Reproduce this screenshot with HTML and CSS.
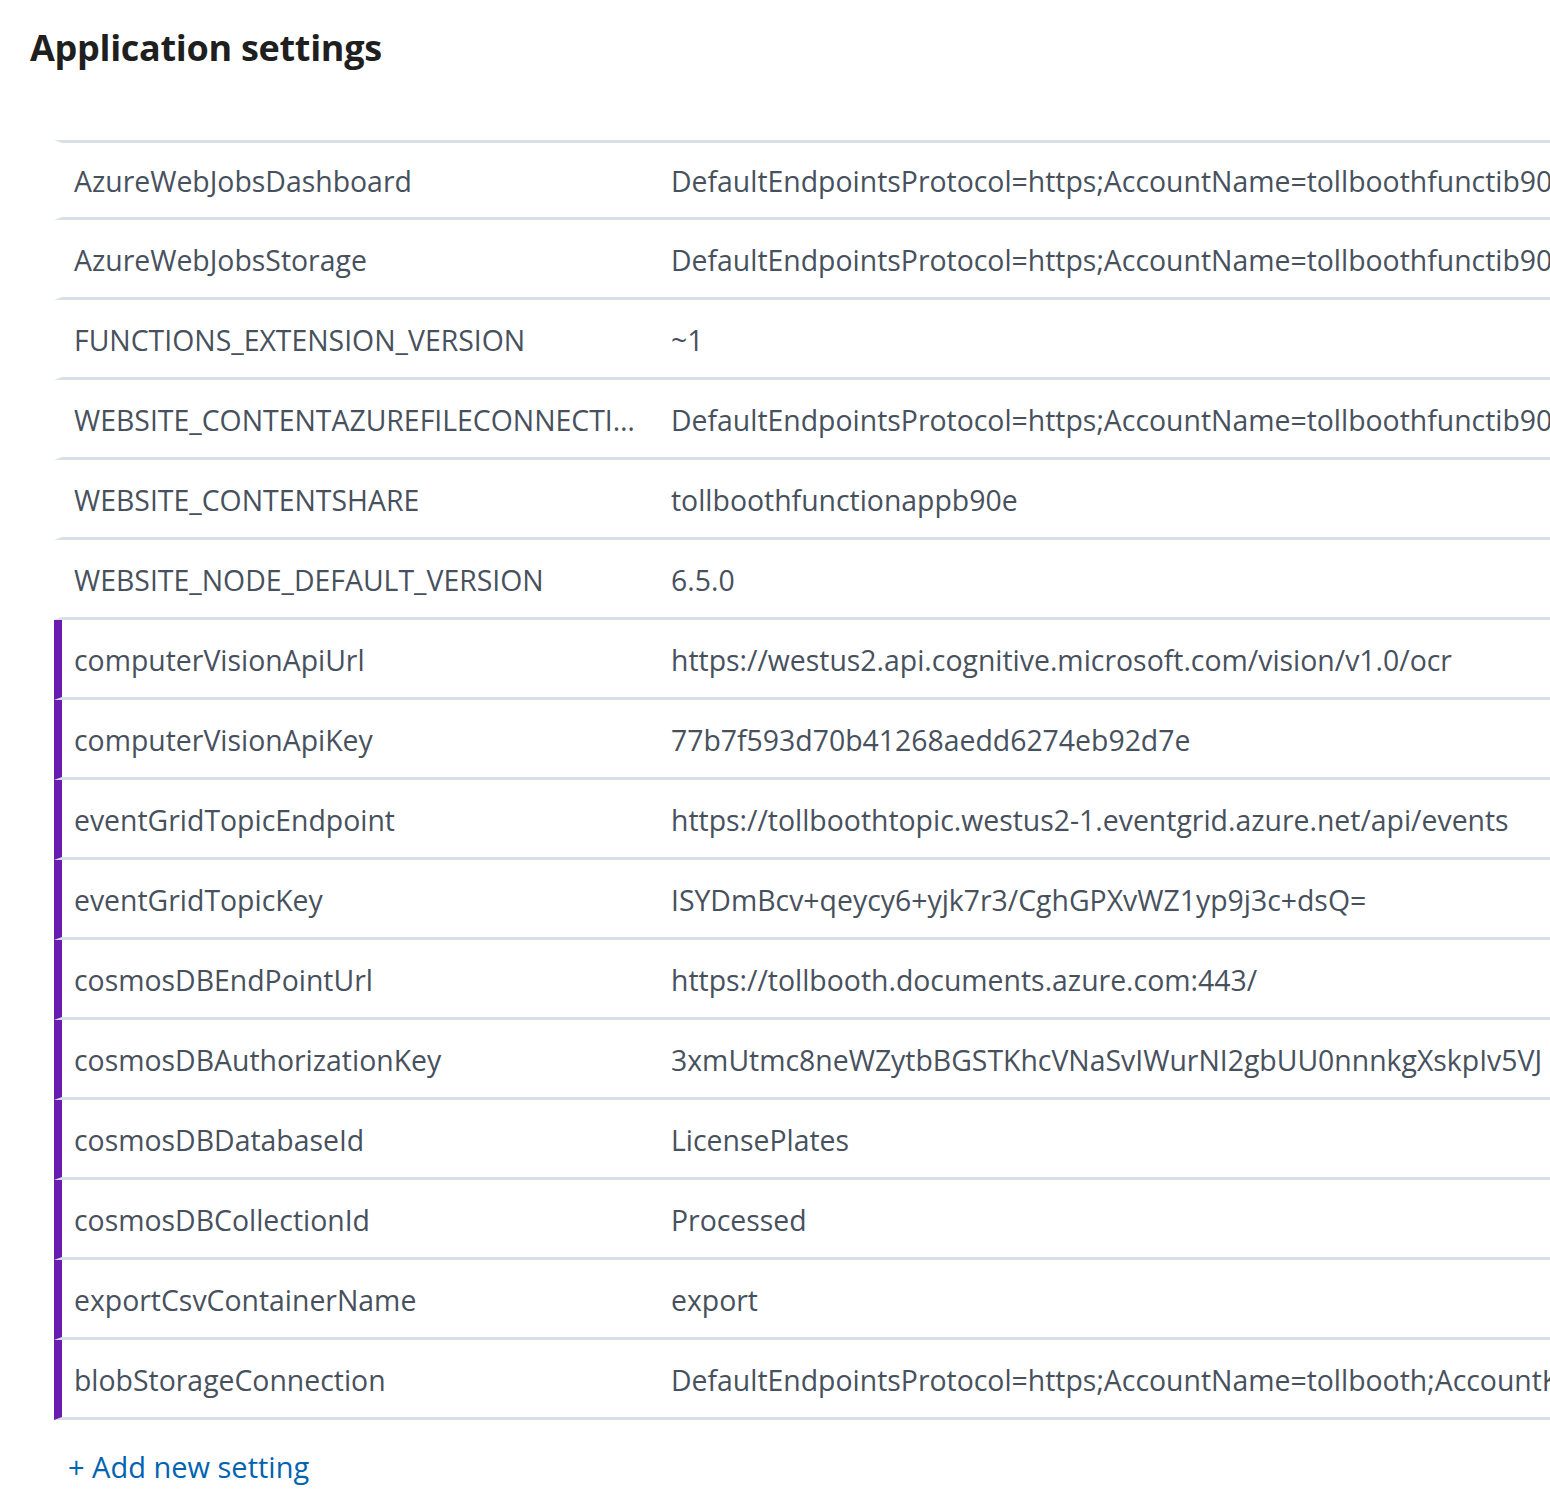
FILE: index.html
```html
<!DOCTYPE html>
<html>
<head>
<meta charset="utf-8">
<title>Application settings</title>
<link rel="stylesheet" href="styles.css">
</head>
<body>
<div class="page">
  <h1 class="title">Application settings</h1>
  <div class="table">
    <div class="row first"><div class="key">AzureWebJobsDashboard</div><div class="val">DefaultEndpointsProtocol=https;AccountName=tollboothfunctib90e</div></div>
    <div class="row"><div class="key">AzureWebJobsStorage</div><div class="val">DefaultEndpointsProtocol=https;AccountName=tollboothfunctib90e</div></div>
    <div class="row"><div class="key">FUNCTIONS_EXTENSION_VERSION</div><div class="val">~1</div></div>
    <div class="row"><div class="key">WEBSITE_CONTENTAZUREFILECONNECTIONSTRING</div><div class="val">DefaultEndpointsProtocol=https;AccountName=tollboothfunctib90e</div></div>
    <div class="row"><div class="key">WEBSITE_CONTENTSHARE</div><div class="val">tollboothfunctionappb90e</div></div>
    <div class="row"><div class="key">WEBSITE_NODE_DEFAULT_VERSION</div><div class="val">6.5.0</div></div>
    <div class="row new"><div class="key">computerVisionApiUrl</div><div class="val">https://westus2.api.cognitive.microsoft.com/vision/v1.0/ocr</div></div>
    <div class="row new"><div class="key">computerVisionApiKey</div><div class="val">77b7f593d70b41268aedd6274eb92d7e</div></div>
    <div class="row new"><div class="key">eventGridTopicEndpoint</div><div class="val">https://tollboothtopic.westus2-1.eventgrid.azure.net/api/events</div></div>
    <div class="row new"><div class="key">eventGridTopicKey</div><div class="val">ISYDmBcv+qeycy6+yjk7r3/CghGPXvWZ1yp9j3c+dsQ=</div></div>
    <div class="row new"><div class="key">cosmosDBEndPointUrl</div><div class="val">https://tollbooth.documents.azure.com:443/</div></div>
    <div class="row new"><div class="key">cosmosDBAuthorizationKey</div><div class="val">3xmUtmc8neWZytbBGSTKhcVNaSvIWurNI2gbUU0nnnkgXskpIv5VJ</div></div>
    <div class="row new"><div class="key">cosmosDBDatabaseId</div><div class="val">LicensePlates</div></div>
    <div class="row new"><div class="key">cosmosDBCollectionId</div><div class="val">Processed</div></div>
    <div class="row new"><div class="key">exportCsvContainerName</div><div class="val">export</div></div>
    <div class="row new"><div class="key">blobStorageConnection</div><div class="val">DefaultEndpointsProtocol=https;AccountName=tollbooth;AccountKey</div></div>
  </div>
  <a class="add" href="#">+ Add new setting</a>
</div>
</body>
</html>
```

FILE: styles.css
```css
html, body {
  margin: 0;
  padding: 0;
  background: #ffffff;
  overflow: hidden;
}
.page {
  width: 1550px;
  font-family: "Open Sans", "Noto Sans", sans-serif;
  color: #47515d;
}
.title {
  margin: 0;
  padding: 22px 0 0 30px;
  font-size: 36px;
  line-height: 52px;
  font-weight: 700;
  color: #1f1f1f;
  letter-spacing: -0.3px;
}
.table {
  margin: 66px 0 0 54px;
  width: 1496px;
  overflow: hidden;
}
.row {
  display: flex;
  align-items: center;
  height: 77px;
  border-left: 8px solid transparent;
  border-bottom: 3px solid #d8e0e5;
  font-size: 28.4px;
  white-space: nowrap;
}
.row.first {
  border-top: 3px solid #d8e0e5;
  height: 74px;
}
.row.new {
  border-left-color: #6a1bb0;
}
.key {
  width: 566px;
  padding: 2px 19px 0 12px;
  overflow: hidden;
  text-overflow: ellipsis;
  flex: none;
}
.val {
  padding: 2px 0 0 12px;
  overflow: hidden;
  flex: 1;
}
.add {
  display: inline-block;
  margin: 27px 0 0 68px;
  font-size: 29px;
  color: #0063b1;
  text-decoration: none;
}
```
